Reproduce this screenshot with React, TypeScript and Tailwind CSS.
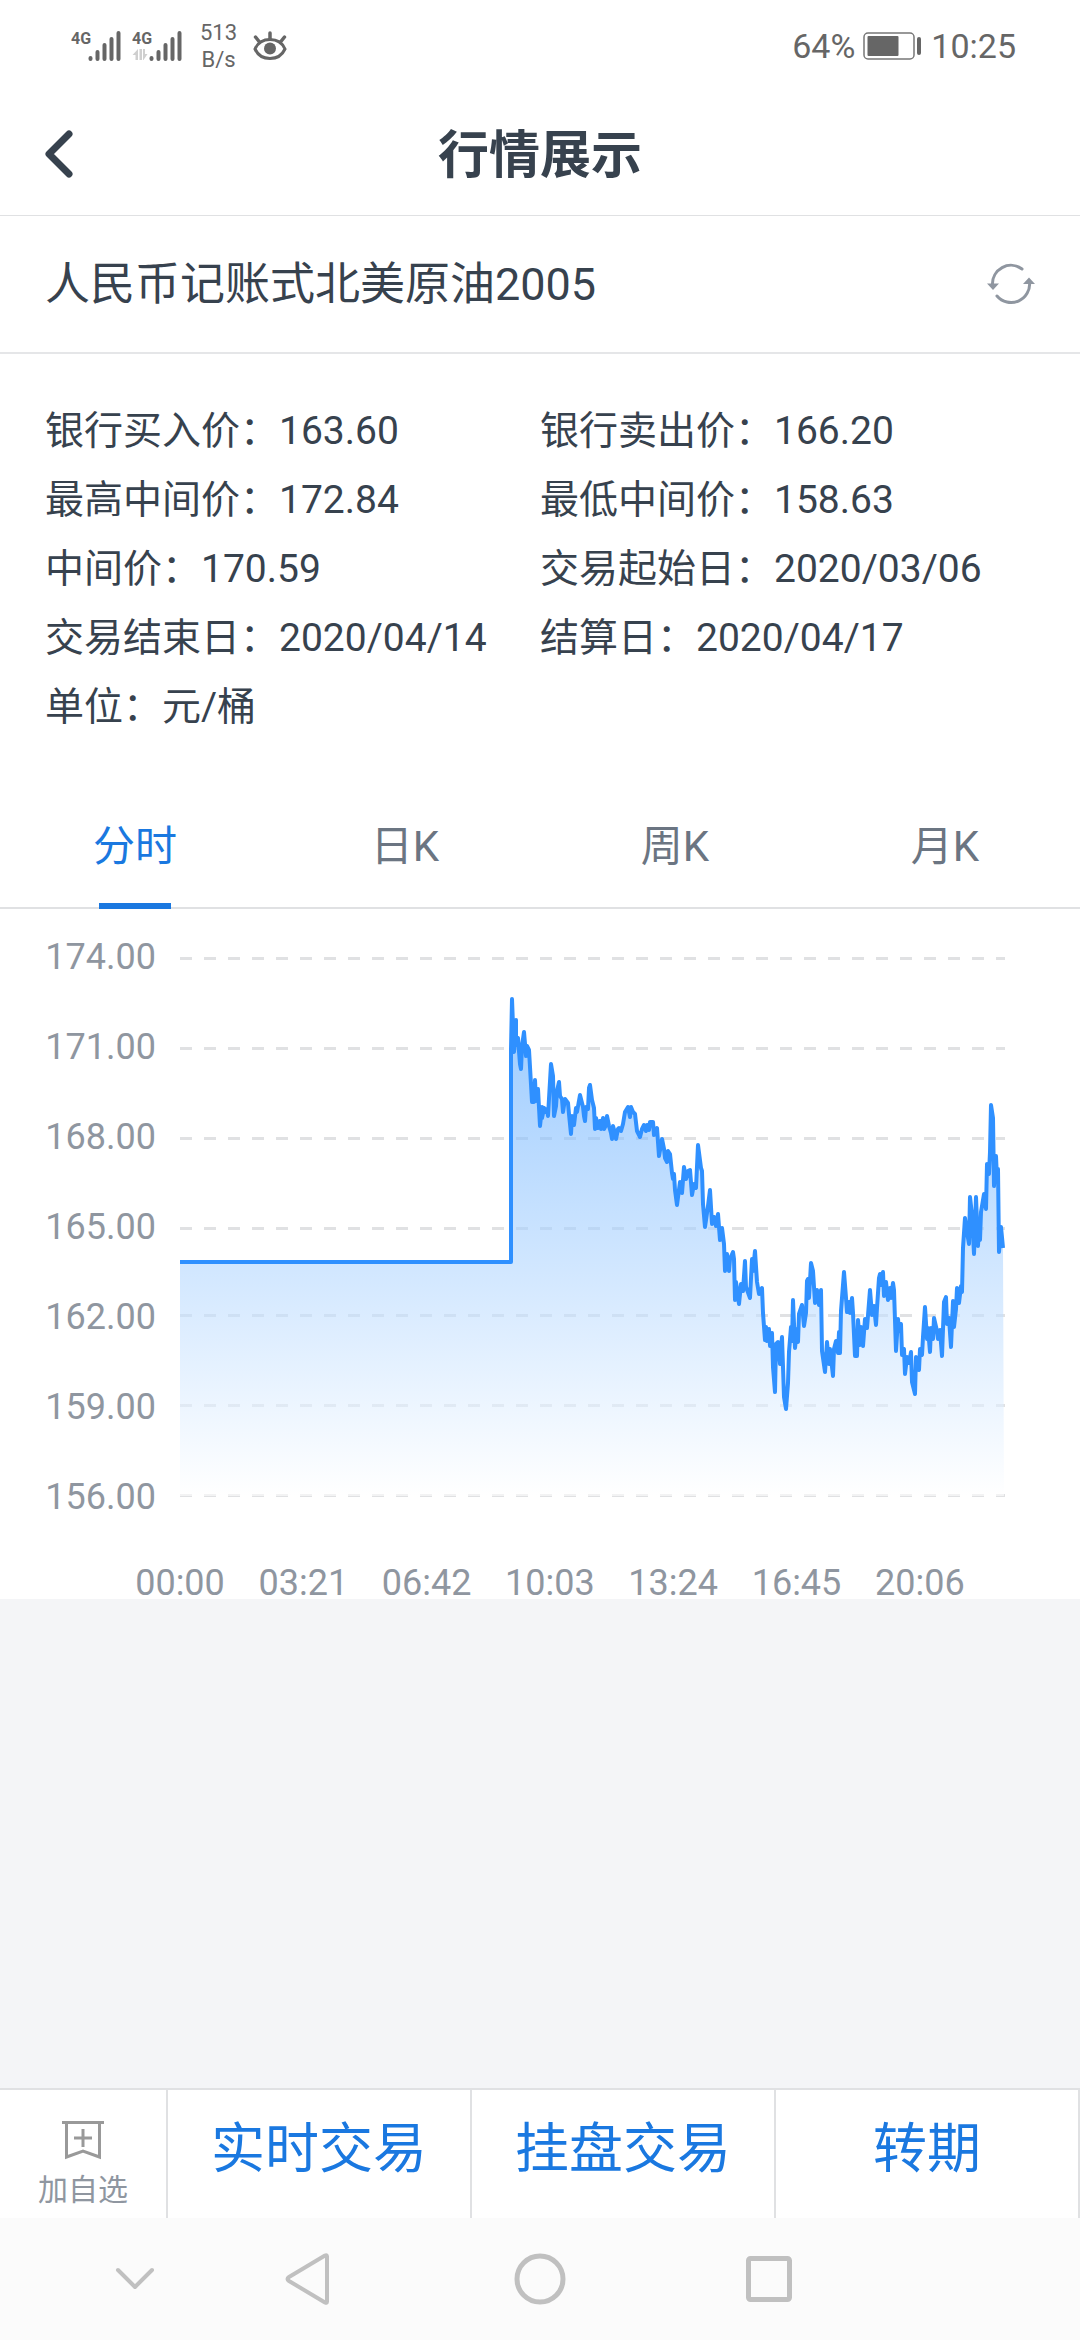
import { useState } from "react";
import type { ReactNode } from "react";

const QUOTES = [
  { label: "银行买入价", value: "163.60" },
  { label: "银行卖出价", value: "166.20" },
  { label: "最高中间价", value: "172.84" },
  { label: "最低中间价", value: "158.63" },
  { label: "中间价", value: "170.59" },
  { label: "交易起始日", value: "2020/03/06" },
  { label: "交易结束日", value: "2020/04/14" },
  { label: "结算日", value: "2020/04/17" },
  { label: "单位", value: "元/桶" },
];

const TABS = ["分时", "日K", "周K", "月K"];

const GRID = [
  { price: "174.00", y: 49.5 },
  { price: "171.00", y: 139.5 },
  { price: "168.00", y: 229.5 },
  { price: "165.00", y: 319.5 },
  { price: "162.00", y: 406.5 },
  { price: "159.00", y: 496.5 },
  { price: "156.00", y: 586.5 },
];

const TIMES = ["00:00", "03:21", "06:42", "10:03", "13:24", "16:45", "20:06"];

// x,y pairs in chart units; flat until the market opens
const SERIES = `
180,353 511,353 511,140 512,90 514,143 516,111 516,136 518,129 520,155 521,160 522,137 524,123
526,147 527,137 529,141 530,158 532,193 533,177 534,193 535,171 536,192 538,180 540,217 542,198
542,209 544,199 546,203 547,200 548,207 551,155 553,167 554,207 556,197 557,182 559,173 560,187
562,190 563,203 565,190 568,194 569,205 571,225 572,207 574,216 576,199 577,203 580,186 583,198
584,207 585,212 586,198 588,200 589,179 590,176 592,191 594,199 595,220 596,209 598,219 600,212
601,220 603,209 604,220 606,216 607,207 609,217 611,224 612,230 613,217 615,224 616,230 618,220
619,219 621,222 623,215 625,203 628,198 630,208 631,198 633,203 635,205 637,222 640,228 642,220
644,216 646,222 647,216 649,221 650,213 653,213 654,226 657,219 659,247 662,230 664,240 665,249
667,253 668,242 670,245 672,264 673,270 674,265 675,281 677,296 680,273 682,284 684,258 686,270
688,262 690,261 692,286 694,275 696,279 698,236 701,259 702,262 703,295 705,318 708,297 710,281
712,315 714,308 716,317 718,305 720,331 722,319 724,335 725,362 727,345 729,362 730,350 733,343
734,350 735,391 736,373 739,395 741,375 743,382 745,352 746,378 750,389 752,350 753,362 755,342
757,373 759,385 762,379 763,404 765,431 766,418 767,432 769,420 770,437 772,424 773,458 775,483
776,435 778,433 780,455 782,428 784,488 786,500 788,474 789,443 791,418 792,432 793,391 795,439
797,420 798,433 799,405 802,396 804,417 806,404 807,372 808,370 809,389 811,354 813,362 815,394
817,381 819,396 821,381 822,442 825,463 827,433 829,455 830,440 833,467 834,440 836,432 838,444
839,423 840,444 841,402 844,363 846,389 847,403 849,393 850,404 852,389 853,404 855,447 857,447
858,411 860,436 861,418 863,437 865,410 867,419 870,381 872,406 874,397 876,416 877,399 879,369
880,365 881,376 883,363 884,387 886,373 888,391 890,379 891,389 893,374 894,381 896,442 898,410
899,422 901,415 902,446 904,440 905,465 907,448 909,454 911,443 912,473 915,485 916,448 919,461
920,440 922,446 923,428 925,398 927,430 928,419 930,443 931,419 933,430 934,409 937,422 938,430
940,421 942,447 944,393 946,388 947,415 949,409 951,438 953,392 954,418 956,400 957,379 959,394
961,377 962,383 963,339 965,309 967,323 969,335 970,288 972,306 974,345 976,288 978,337 979,319
980,331 981,303 984,285 986,300 987,255 989,265 990,243 991,196 993,209 994,277 996,247 997,270
998,260 999,343 1001,318 1003,339`;

function SignalIcon({ data = false }: { data?: boolean }) {
  return (
    <svg width="52" height="34" viewBox="0 0 52 34" fill="none" aria-hidden="true">
      <text x="0" y="15" fill="#666666" fontSize="16" fontWeight="700">
        4G
      </text>
      {data && (
        <path
          d="M6 20v11H3.500v-5H0.500zM7.500 20h2.500v11H7.500zM11 20h2v5h2.500l-4 6h-.5z"
          fill="#cfcfcf"
        />
      )}
      <g stroke="#666666" strokeWidth="4" strokeLinecap="round">
        <path d="M19.500 29v1M26.500 23v7M33.500 16v14M40.500 10v20M47.500 4v26" />
      </g>
    </svg>
  );
}

function StatusBar() {
  return (
    <div className="flex h-[92px] items-center justify-between pr-16 pl-[71px] text-[#666666]">
      <div className="flex items-center">
        <div className="flex gap-[9px]">
          <SignalIcon />
          <SignalIcon data />
        </div>
        <div className="ml-4 text-center text-[22px] leading-[27px]">
          <div>513</div>
          <div>B/s</div>
        </div>
        <svg className="ml-4" width="34" height="32" viewBox="0 0 34 32" fill="none" aria-hidden="true">
          <path
            d="M2 19C5 12 11 9.500 17 9.500S29 12 32 19C29 25.500 23 28.500 17 28.500S5 25.500 2 19Z"
            stroke="#666666"
            strokeWidth="3"
          />
          <circle cx="17" cy="18.500" r="6" fill="#666666" />
          <path d="M17 9V3M6.500 12 2.500 7M27.500 12l4-5" stroke="#666666" strokeWidth="3.500" strokeLinecap="round" />
        </svg>
      </div>
      <div className="flex items-center text-[34px] leading-10">
        <span>64%</span>
        <svg className="mx-2" width="60" height="28" viewBox="0 0 60 28" fill="none" aria-hidden="true">
          <rect x="1" y="1" width="50" height="26" rx="4" stroke="#777777" strokeWidth="1.500" />
          <rect x="4.500" y="4" width="31" height="20" rx="1" fill="#666666" />
          <rect x="54" y="5" width="4" height="18" rx="2" fill="#666666" />
        </svg>
        <span>10:25</span>
      </div>
    </div>
  );
}

function PriceChart() {
  return (
    <svg
      className="block h-auto w-full overflow-visible"
      viewBox="0 0 1080 690"
      fill="none"
      role="img"
      aria-label="分时"
    >
      <defs>
        <linearGradient id="area" gradientUnits="userSpaceOnUse" x1="0" y1="90" x2="0" y2="587">
          <stop offset="0" stopColor="#58a7ff" />
          <stop offset="1" stopColor="#ffffff" />
        </linearGradient>
      </defs>

      {/* Price axis */}
      {GRID.map(({ price, y }, i) => (
        <g key={price}>
          <line x1="180" x2="1005" y1={y} y2={y} stroke="#e0e1e3" strokeWidth="3" strokeDasharray="12 12" />
          <text x="156" y={60 + i * 90} textAnchor="end" fontSize="36" fill="#8f96a0">
            {price}
          </text>
        </g>
      ))}

      <polygon points={`180,587 ${SERIES} 1004,587`} fill="url(#area)" fillOpacity="0.6" />
      <polyline points={SERIES} stroke="#2f90ff" strokeWidth="4" strokeLinejoin="round" />

      {/* Time axis */}
      {TIMES.map((time, i) => (
        <text key={time} x={180 + i * 123.3} y="686" textAnchor="middle" fontSize="36" fill="#8f96a0">
          {time}
        </text>
      ))}
    </svg>
  );
}

function NavButton({ label, children }: { label: string; children: ReactNode }) {
  return (
    <button type="button" aria-label={label} className="flex items-center justify-center">
      <svg
        width="52"
        height="52"
        viewBox="0 0 52 52"
        fill="none"
        stroke="#c0c0c0"
        strokeWidth="5"
        strokeLinecap="round"
        strokeLinejoin="round"
      >
        {children}
      </svg>
    </button>
  );
}

export default function App() {
  const [tab, setTab] = useState("分时");

  return (
    <div className="flex min-h-screen flex-col bg-[#f4f5f7] font-[Roboto,'Noto_Sans_CJK_SC',sans-serif] text-[#37424e]">
      <div className="bg-white">
        <StatusBar />

        {/* Header */}
        <header className="grid h-[124px] grid-cols-[1fr_auto_1fr] items-center border-b border-[#e0e1e3] px-[45px]">
          <button type="button" aria-label="返回" className="justify-self-start">
            <svg width="28" height="48" viewBox="0 0 28 48" fill="none">
              <path d="M24 4 4 24l20 20" stroke="#37424e" strokeWidth="7" strokeLinecap="round" strokeLinejoin="round" />
            </svg>
          </button>
          <h1 className="pt-1 text-[51px] leading-none font-bold">行情展示</h1>
        </header>

        {/* Contract */}
        <div className="flex h-[138px] items-center justify-between border-b-2 border-[#e5e6e8] px-[45px]">
          <h2 className="text-[45px] leading-none">人民币记账式北美原油2005</h2>
          <button type="button" aria-label="刷新">
            <svg width="48" height="42" viewBox="0 0 48 42" fill="none">
              <path
                d="M35 6A18.500 18.500 0 0 0 5.500 22M10 33A18.500 18.500 0 0 0 42.500 19"
                stroke="#8f96a0"
                strokeWidth="3"
                strokeLinecap="round"
              />
              <path d="M0 20.500h12L6 27zM36 21h12l-6-6.500z" fill="#8f96a0" />
            </svg>
          </button>
        </div>

        {/* Quote details */}
        <dl className="grid grid-cols-2 px-[45px] pt-[43px] pb-[39px] text-[39px] leading-[69px]">
          {QUOTES.map((q) => (
            <div key={q.label} className="flex whitespace-nowrap">
              <dt>{q.label}：</dt>
              <dd>{q.value}</dd>
            </div>
          ))}
        </dl>

        {/* Period tabs */}
        <div role="tablist" className="grid h-32 grid-cols-4 border-b-2 border-[#e0e1e3]">
          {TABS.map((name) => {
            const active = tab === name;
            return (
              <button
                key={name}
                type="button"
                role="tab"
                aria-selected={active}
                onClick={() => setTab(name)}
                className={`relative pt-1.5 text-[42px] leading-none ${active ? "text-[#1a78e0]" : "text-[#6b7582]"}`}
              >
                {name}
                {active && (
                  <span className="absolute -bottom-0.5 left-1/2 h-1.5 w-[72px] -translate-x-1/2 bg-[#1a78e0]"></span>
                )}
              </button>
            );
          })}
        </div>

        <PriceChart />
      </div>

      <div className="grow"></div>

      {/* Actions */}
      <div className="grid h-[130px] grid-cols-[168px_1fr_1fr_1fr] border-t-2 border-[#e0e1e3] bg-white text-[54px] text-[#1a78e0]">
        <button
          type="button"
          className="flex flex-col items-center justify-end border-r-2 border-[#e0e1e3] pb-2.5 text-[30px] leading-9 text-[#8f96a0]"
        >
          <svg className="mb-3" width="42" height="40" viewBox="0 0 42 40" fill="none" stroke="#999999" strokeWidth="3">
            <path d="M0 2.500h42M4.500 2.500v34.500L21 31l16.500 6V2.500M21 9v18M12 18h18" />
          </svg>
          加自选
        </button>
        <button type="button" className="border-r-2 border-[#e0e1e3] pb-2 leading-none">
          实时交易
        </button>
        <button type="button" className="border-r-2 border-[#e0e1e3] pb-2 leading-none">
          挂盘交易
        </button>
        <button type="button" className="border-r-2 border-[#e0e1e3] pb-2 leading-none">
          转期
        </button>
      </div>

      {/* System navigation */}
      <nav className="grid h-[122px] grid-cols-[174fr_174fr_288fr_170fr_226fr] bg-[#fbfbfb] pl-12">
        <NavButton label="收起">
          <path d="m9 17 17 17 17-17" strokeWidth="4" />
        </NavButton>
        <NavButton label="后退">
          <path d="M44 3.500v45q0 2-2 1L6 28q-3-2 0-4L42 2.500q2-1 2 1Z" strokeWidth="4" />
        </NavButton>
        <NavButton label="主页">
          <circle cx="26" cy="26" r="23" />
        </NavButton>
        <NavButton label="最近任务">
          <rect x="5.500" y="5.500" width="41" height="41" rx="2" />
        </NavButton>
      </nav>
    </div>
  );
}
